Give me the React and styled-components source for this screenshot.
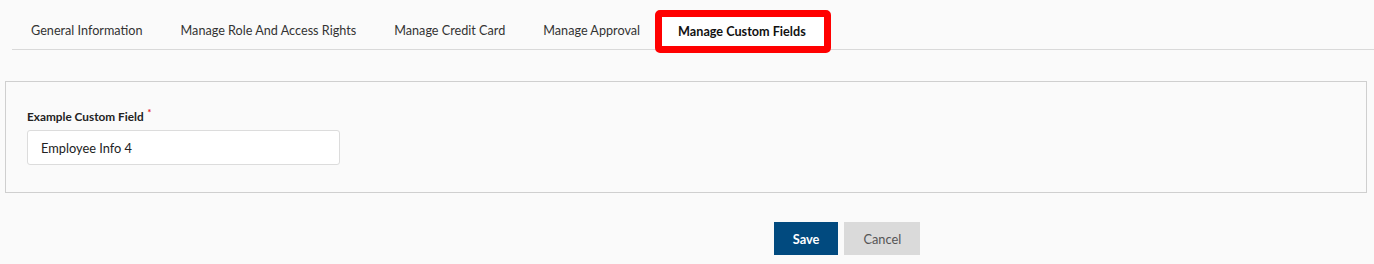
import React, { useState } from "react";
import styled, { createGlobalStyle, css } from "styled-components";

const tabs = [
  "General Information",
  "Manage Role And Access Rights",
  "Manage Credit Card",
  "Manage Approval",
  "Manage Custom Fields",
];

function App() {
  const [active, setActive] = useState(4);
  const [value, setValue] = useState("Employee Info 4");

  return (
    <>
      <GlobalStyle />
      <Page>
        <TabList>
          {tabs.map((label, i) => (
            <Tab key={label} active={i === active} onClick={() => setActive(i)}>
              {label}
            </Tab>
          ))}
        </TabList>
        <Panel>
          <Label>
            Example Custom Field <Required>*</Required>
          </Label>
          <Input value={value} onChange={(e) => setValue(e.target.value)} />
        </Panel>
        <Actions>
          <Button primary>Save</Button>
          <Button>Cancel</Button>
        </Actions>
      </Page>
    </>
  );
}

const GlobalStyle = createGlobalStyle`
  html, body {
    margin: 0;
    padding: 0;
    background: #fafafa;
  }
  body {
    font-family: Lato, "Open Sans", Arial, sans-serif;
  }
`;

const Page = styled.div`
  width: 1374px;
  height: 264px;
  background: #fafafa;
  overflow: hidden;
`;

const TabList = styled.div`
  display: flex;
  margin-left: 12px;
  padding-top: 10px;
  border-bottom: 1px solid #d9d9d9;
`;

const Tab = styled.div`
  position: relative;
  padding: 12.5px 19px 9.5px;
  font-size: 12.65px;
  line-height: 16px;
  color: #333;
  cursor: pointer;
  ${(props) =>
    props.active &&
    css`
      font-weight: 700;
      color: #111;
      background: #fff;
      border: 1px solid #dcdcdc;
      border-bottom: none;
      padding: 6.5px 18px 9.5px;
      margin-top: 6px;
      &::after {
        content: "";
        position: absolute;
        left: -5px;
        right: -7px;
        top: -7px;
        bottom: -4px;
        border: 7px solid #ff0000;
        border-radius: 5px;
        pointer-events: none;
      }
    `};
`;

const Panel = styled.div`
  margin: 31px 7px 0 5px;
  padding: 28px 21px 27px;
  border: 1px solid #cfcfcf;
  background: #fafafa;
`;

const Label = styled.div`
  font-size: 11.8px;
  line-height: 14px;
  font-weight: 700;
  color: #222;
  margin-bottom: 6px;
`;

const Required = styled.sup`
  color: #e02020;
  font-size: 9px;
  line-height: 0;
  margin-left: 1px;
`;

const Input = styled.input`
  display: block;
  box-sizing: border-box;
  width: 313px;
  height: 35px;
  padding: 0 13px;
  border: 1px solid #dcdcdc;
  border-radius: 3px;
  background: #fff;
  font-family: Lato, "Open Sans", Arial, sans-serif;
  font-size: 12.8px;
  color: #222;
  outline: none;
`;

const Actions = styled.div`
  display: flex;
  justify-content: center;
  gap: 6px;
  margin-top: 29px;
  padding-left: 320px;
`;

const Button = styled.button`
  height: 33px;
  padding: 0 19px;
  border: none;
  border-radius: 0;
  font-family: Lato, "Open Sans", Arial, sans-serif;
  font-size: 12.8px;
  cursor: pointer;
  background: #dadada;
  color: #555;
  ${(props) =>
    props.primary &&
    css`
      background: #014a7f;
      color: #fff;
      font-weight: 700;
    `};
`;

export default App;
